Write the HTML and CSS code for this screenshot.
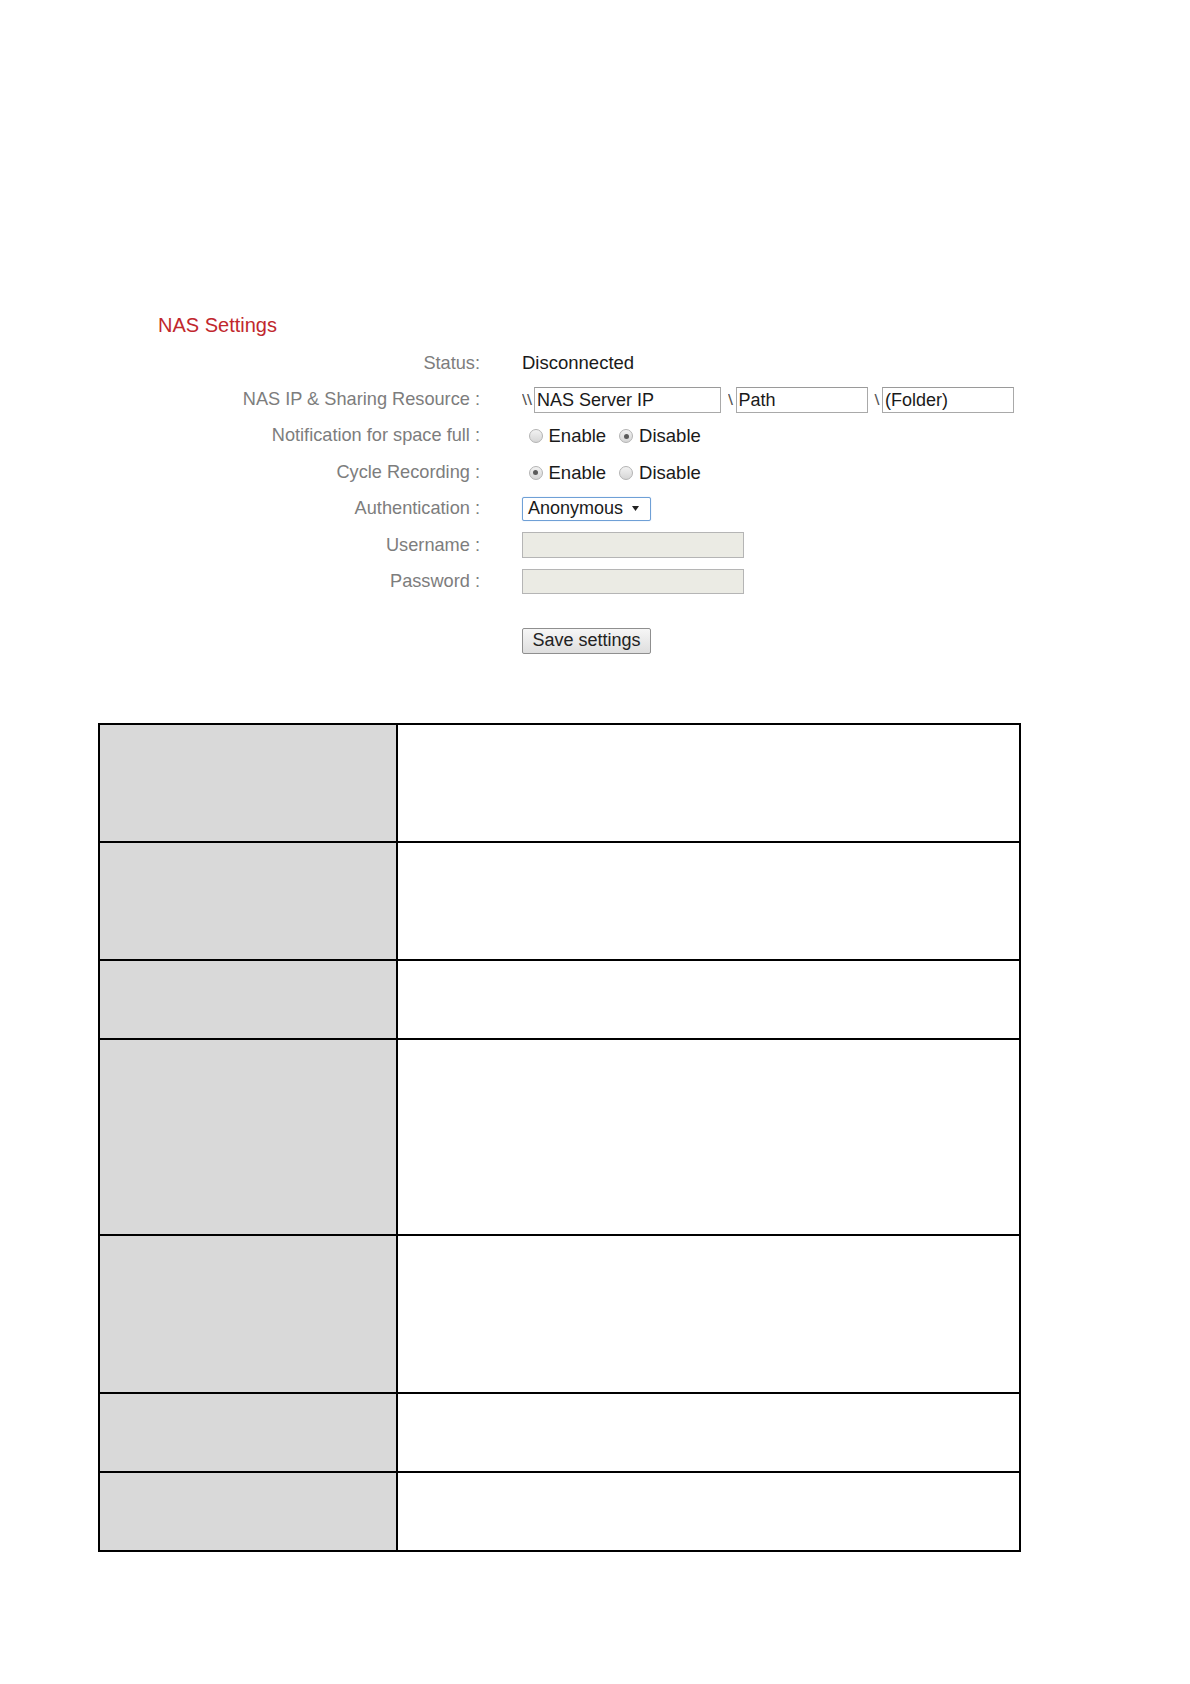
FILE: index.html
```html
<!DOCTYPE html>
<html lang="en">
<head>
<meta charset="utf-8">
<title>NAS Settings</title>
<link rel="stylesheet" href="styles.css">
</head>
<body>
<div class="page">
  <section class="nas">
    <h2 class="nas-title">NAS Settings</h2>
    <div class="form">
      <div class="label">Status:</div>
      <div class="value">Disconnected</div>

      <div class="label">NAS IP &amp; Sharing Resource :</div>
      <div class="value path">
        <span class="sep first">\\</span><input class="txt w-ip" type="text" value="NAS Server IP"><span class="sep">\</span><input class="txt w-path" type="text" value="Path"><span class="sep">\</span><input class="txt w-path" type="text" value="(Folder)">
      </div>

      <div class="label">Notification for space full :</div>
      <div class="value opts">
        <span class="radio"></span><span class="opt">Enable</span>
        <span class="radio on"></span><span class="opt">Disable</span>
      </div>

      <div class="label">Cycle Recording :</div>
      <div class="value opts">
        <span class="radio on"></span><span class="opt">Enable</span>
        <span class="radio"></span><span class="opt">Disable</span>
      </div>

      <div class="label">Authentication :</div>
      <div class="value">
        <div class="select"><span>Anonymous</span><svg class="caret" width="7" height="5" viewBox="0 0 7 5"><path d="M0 0H7L3.5 5Z" fill="#222"/></svg></div>
      </div>

      <div class="label">Username :</div>
      <div class="value"><input class="txt w-user" type="text" disabled></div>

      <div class="label">Password :</div>
      <div class="value"><input class="txt w-user pw" type="password" disabled></div>
    </div>
    <div class="actions">
      <button class="btn" type="button">Save settings</button>
    </div>
  </section>

  <div class="spec">
    <div class="k"></div><div class="v"></div>
    <div class="k"></div><div class="v"></div>
    <div class="k"></div><div class="v"></div>
    <div class="k"></div><div class="v"></div>
    <div class="k"></div><div class="v"></div>
    <div class="k"></div><div class="v"></div>
    <div class="k"></div><div class="v"></div>
  </div>
</div>
</body>
</html>
```

FILE: styles.css
```css
html, body {
  margin: 0;
  padding: 0;
  background: #ffffff;
}

body {
  font-family: "Liberation Sans", Arial, sans-serif;
  color: #222222;
}

.page {
  padding-top: 313px;
  padding-bottom: 130px;
}

.nas {
  padding-left: 158px;
}

.nas-title {
  margin: 0;
  font-size: 20px;
  line-height: 24px;
  font-weight: normal;
  color: #c1272d;
}

.form {
  margin-top: 8px;
  display: grid;
  grid-template-columns: 322px 1fr;
  column-gap: 42px;
  grid-auto-rows: 36.4px;
  align-items: center;
}

.label {
  text-align: right;
  font-size: 18.2px;
  color: #7d7d7d;
  white-space: nowrap;
}

.value {
  font-size: 18.5px;
  color: #1a1a1a;
  display: flex;
  align-items: center;
  white-space: nowrap;
}

.path {
  padding-top: 1px;
}

.sep {
  font-size: 18px;
  color: #555555;
  margin: 0 2.5px 0 7px;
  align-self: flex-start;
  margin-top: 3px;
  transform: scaleY(0.85);
}

.sep.first {
  margin-left: 0;
  margin-right: 2px;
}

.txt {
  box-sizing: border-box;
  height: 26px;
  margin: 0;
  padding: 0 2px;
  border: 1px solid #a9a9a9;
  border-top-color: #9a9a9a;
  border-radius: 0;
  background: #ffffff;
  font-family: "Liberation Sans", Arial, sans-serif;
  font-size: 18px;
  color: #1a1a1a;
  outline: none;
}

.w-ip { width: 187px; }
.w-path { width: 132px; }

.w-user {
  width: 222px;
  height: 26px;
  background: #ebebe4;
  border-color: #b5b5b5;
}

.w-user.pw { height: 25px; }

.opts {
  padding-top: 1px;
}

.opts .radio {
  margin-left: 6.5px;
}

.opts .radio + .opt + .radio {
  margin-left: 13px;
}

.radio {
  position: relative;
  box-sizing: border-box;
  width: 14px;
  height: 14px;
  border-radius: 50%;
  border: 1px solid #b3b3b3;
  background: linear-gradient(#f2f2f2, #d6d6d6);
  flex: none;
}

.radio.on::after {
  content: "";
  position: absolute;
  left: 3.5px;
  top: 3.5px;
  width: 5px;
  height: 5px;
  border-radius: 50%;
  background: #5a5a5a;
}

.opt {
  margin-left: 6px;
}

.select {
  box-sizing: border-box;
  width: 129px;
  height: 24px;
  border: 1px solid #6fa0d6;
  border-radius: 2px;
  box-shadow: 0 0 1px #9cc3ee;
  background: #ffffff;
  display: flex;
  align-items: center;
  padding-left: 5px;
  font-size: 18px;
  color: #1a1a1a;
}

.caret {
  margin-left: 9px;
}

.actions {
  margin-top: 28px;
  padding-left: 364px;
}

.btn {
  box-sizing: border-box;
  width: 129px;
  height: 26px;
  margin: 0;
  padding: 0;
  border: 1px solid #8f8f8f;
  border-radius: 2px;
  background: linear-gradient(#f6f6f6, #dedede);
  font-family: "Liberation Sans", Arial, sans-serif;
  font-size: 18px;
  color: #222222;
}

.spec {
  margin-top: 69px;
  margin-left: 98px;
  width: fit-content;
  display: grid;
  grid-template-columns: 296px 621px;
  grid-template-rows: 116px 116px 77px 194px 156px 77px 77px;
  gap: 2px;
  padding: 2px;
  background: #000000;
}

.spec .k { background: #d9d9d9; }
.spec .v { background: #ffffff; }
```
